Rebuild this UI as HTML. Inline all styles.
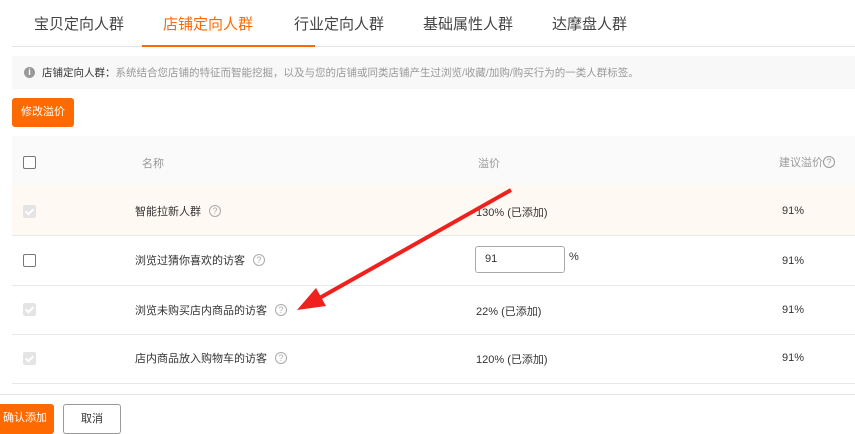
<!DOCTYPE html>
<html><head><meta charset="utf-8"><style>
*{margin:0;padding:0;box-sizing:border-box}
body{width:855px;height:430px;overflow:hidden;background:#fff;font-family:"Liberation Sans","Noto Sans CJK SC",sans-serif;color:#333;position:relative;font-size:12px}
.abs{position:absolute}
.tab{position:absolute;top:13px;font-size:15px;color:#444}
.cb{position:absolute;left:23px;width:13px;height:13px;border:1px solid #777;border-radius:2px;background:#fff}
.cbd{position:absolute;left:23px;width:13px;height:13px;border-radius:2px;background:#e4e4e4}
.cbd:after{content:"";position:absolute;left:4px;top:2px;width:3px;height:6px;border:solid #fff;border-width:0 2px 2px 0;transform:rotate(45deg)}
.q{display:inline-block;width:12px;height:12px;border:1px solid #aaa;border-radius:50%;font-size:9px;line-height:10px;text-align:center;color:#aaa;margin-left:8px;vertical-align:1px}
.row{position:absolute;left:12px;width:843px;border-bottom:1px solid #e8e8e8}
.t{position:absolute;font-size:11px;color:#333}
</style></head><body>
<div class="tab" style="left:34px">宝贝定向人群</div>
<div class="tab" style="left:163px;color:#ff6a00">店铺定向人群</div>
<div class="tab" style="left:294px">行业定向人群</div>
<div class="tab" style="left:423px">基础属性人群</div>
<div class="tab" style="left:552px">达摩盘人群</div>
<div class="abs" style="left:12px;top:46px;width:843px;height:1px;background:#e4e4e4"></div>
<div class="abs" style="left:142px;top:45px;width:173px;height:2px;background:#ff6a00"></div>
<div class="abs" style="left:12px;top:56px;width:843px;height:33px;background:#f8f8f8"></div>
<div class="abs" style="left:24px;top:67px;width:11px;height:11px;border-radius:50%;background:#999;color:#fff;font-size:9px;line-height:11px;text-align:center;font-weight:bold">i</div>
<div class="t" style="left:42px;top:65px;font-size:10.5px;color:#333">店铺定向人群：<span style="color:#999">系统结合您店铺的特征而智能挖掘，以及与您的店铺或同类店铺产生过浏览/收藏/加购/购买行为的一类人群标签。</span></div>
<div class="abs" style="left:12px;top:98px;width:62px;height:29px;background:#ff6a00;border-radius:3px;color:#fff;font-size:11px;line-height:29px;text-align:center">修改溢价</div>
<div class="abs" style="left:12px;top:136px;width:843px;height:49px;background:#fafafa"></div>
<div class="cb" style="top:156px"></div>
<div class="t" style="left:142px;top:155px;color:#999">名称</div>
<div class="t" style="left:478px;top:155px;color:#999">溢价</div>
<div class="t" style="left:779px;top:154px;color:#999">建议溢价<span class="q" style="margin-left:0;color:#999;border-color:#999">?</span></div>
<div class="row" style="top:185px;height:51px;background:#fff9f3"></div>
<div class="cbd" style="top:205px"></div>
<div class="t" style="left:135px;top:203px">智能拉新人群<span class="q">?</span></div>
<div class="t" style="left:476px;top:204px">130% (已添加)</div>
<div class="t" style="left:782px;top:205px">91%</div>
<div class="row" style="top:236px;height:50px"></div>
<div class="cb" style="top:254px"></div>
<div class="t" style="left:135px;top:252px">浏览过猜你喜欢的访客<span class="q">?</span></div>
<div class="abs" style="left:475px;top:246px;width:90px;height:27px;border:1px solid #aaa;border-radius:3px;font-size:11px;line-height:25px;padding-left:9px">91</div>
<div class="t" style="left:569px;top:251px">%</div>
<div class="t" style="left:782px;top:255px">91%</div>
<div class="row" style="top:286px;height:49px"></div>
<div class="cbd" style="top:303px"></div>
<div class="t" style="left:135px;top:302px">浏览未购买店内商品的访客<span class="q">?</span></div>
<div class="t" style="left:476px;top:303px">22% (已添加)</div>
<div class="t" style="left:782px;top:304px">91%</div>
<div class="row" style="top:335px;height:49px"></div>
<div class="cbd" style="top:352px"></div>
<div class="t" style="left:135px;top:350px">店内商品放入购物车的访客<span class="q">?</span></div>
<div class="t" style="left:476px;top:351px">120% (已添加)</div>
<div class="t" style="left:782px;top:352px">91%</div>
<div class="abs" style="left:0;top:394px;width:855px;height:1px;background:#e4e4e4"></div>
<div class="abs" style="left:-4px;top:404px;width:58px;height:30px;background:#ff6a00;border-radius:3px;color:#fff;font-size:11px;line-height:28px;text-align:center">确认添加</div>
<div class="abs" style="left:63px;top:404px;width:58px;height:30px;border:1px solid #999;border-radius:3px;font-size:11px;line-height:28px;text-align:center">取消</div>
<svg class="abs" style="left:0;top:0" width="855" height="430">
<line x1="511" y1="190" x2="316" y2="300" stroke="#f0201c" stroke-width="4"/>
<polygon points="297,310 316,288 326,306" fill="#f0201c"/>
</svg>
</body></html>
